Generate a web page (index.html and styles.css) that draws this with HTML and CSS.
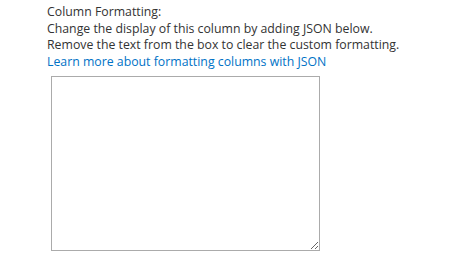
FILE: index.html
```html
<!DOCTYPE html>
<html lang="en">
<head>
    <meta charset="UTF-8">
    <meta name="viewport" content="width=device-width, initial-scale=1.0">
    <title>Column Formatting</title>
    <link rel="stylesheet" href="styles.css">
</head>
<body>
    <div class="panel">
        <div class="label">Column Formatting:</div>
        <div class="desc">Change the display of this column by adding JSON below.</div>
        <div class="desc">Remove the text from the box to clear the custom formatting.</div>
        <a class="learn" href="#">Learn more about formatting columns with JSON</a>
        <textarea class="json-box"></textarea>
    </div>
</body>
</html>
```

FILE: styles.css
```css
body, html {
    margin: 0;
    padding: 0;
    background: #ffffff;
    font-family: "Open Sans", "Noto Sans", sans-serif;
}

.panel {
    display: flex;
    flex-direction: column;
    align-items: flex-start;
    padding: 4px 0 0 47px;
    font-size: 12.3px;
    line-height: 16.7px;
    color: #333333;
}

.learn {
    color: #0072c6;
    text-decoration: none;
}

.json-box {
    box-sizing: border-box;
    width: 269px;
    height: 175px;
    margin: 5px 0 0 4px;
    border: 1px solid #ababab;
    padding: 4px;
    font-family: inherit;
    font-size: 12.3px;
}
```
